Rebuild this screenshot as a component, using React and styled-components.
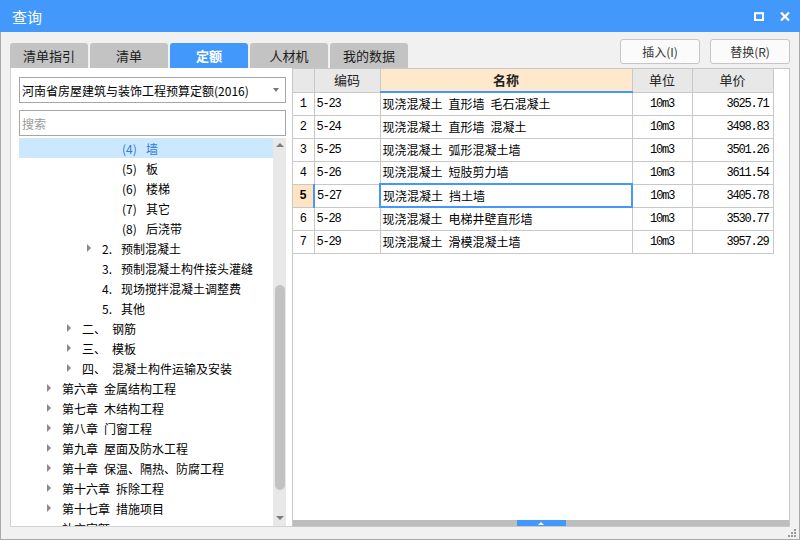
import React from "react";
import styled, { createGlobalStyle } from "styled-components";

const blue = "#4399fb";
const line = "#c8c8c8";
const sans = `"Noto Sans CJK SC", "Noto Sans", sans-serif`;
const mono = `"Liberation Mono", "Noto Sans CJK SC", monospace`;

const GlobalStyle = createGlobalStyle`
  html, body { margin: 0; padding: 0; background: #f1f1f1; }
  body { font-family: ${sans}; font-size: 12px; color: #000; }
`;

const Window = styled.div`
  width: 800px;
  height: 540px;
  display: flex;
  flex-direction: column;
  overflow: hidden;
  background: #f1f1f1;
`;

const TitleBar = styled.div`
  height: 32px;
  flex: none;
  background: ${blue};
  display: flex;
  align-items: center;
  padding: 0 10px 0 12px;
  color: #fff;
`;

const Title = styled.span`
  font-size: 15px;
  flex: 1;
  line-height: 1;
`;

const TitleButtons = styled.div`
  display: flex;
  align-items: center;
  gap: 16px;
`;

const Frame = styled.div`
  position: relative;
  flex: 1;
  display: flex;
  flex-direction: column;
  border: 1px solid #a9a9a9;
  border-top: none;
  padding: 0 9px 12px 9px;
  min-height: 0;
`;

const Toolbar = styled.div`
  height: 36px;
  flex: none;
  display: flex;
`;

const Tabs = styled.div`
  display: flex;
  gap: 2px;
  align-self: flex-end;
  flex: 1;
`;

const Tab = styled.div`
  width: 78px;
  height: 25px;
  border-radius: 3px 3px 0 0;
  background: ${p => (p.$active ? blue : "#c3c3c3")};
  color: ${p => (p.$active ? "#fff" : "#1c1c1c")};
  font-weight: ${p => (p.$active ? 700 : 400)};
  font-size: 13px;
  display: flex;
  align-items: center;
  justify-content: center;
`;

const Buttons = styled.div`
  display: flex;
  gap: 10px;
  margin-top: 7px;
  align-self: flex-start;
`;

const Button = styled.button`
  width: 80px;
  height: 25px;
  box-sizing: border-box;
  border: 1px solid #c6c6c6;
  border-radius: 3px;
  background: #fbfbfb;
  color: #333;
  font-family: ${sans};
  font-size: 12px;
  padding: 0;
`;

const Content = styled.div`
  flex: 1;
  display: flex;
  min-height: 0;
`;

const LeftPanel = styled.div`
  width: 282px;
  box-sizing: border-box;
  flex: none;
  background: #fff;
  border-left: 1px solid #d2d2d2;
  border-bottom: 1px solid #d2d2d2;
  padding: 9px 6px 0 8px;
  display: flex;
  flex-direction: column;
`;

const Field = styled.div`
  height: 26px;
  box-sizing: border-box;
  border: 1px solid #a6a6a6;
  display: flex;
  align-items: center;
  padding: 0 6px 0 2px;
  font-size: 12px;
  color: ${p => (p.$placeholder ? "#9a9a9a" : "#000")};
  margin-bottom: ${p => p.$gap || 0}px;
  flex: none;
`;

const FieldText = styled.span`
  flex: 1;
  white-space: nowrap;
`;

const DropArrow = styled.span`
  width: 0;
  height: 0;
  border-left: 3.5px solid transparent;
  border-right: 3.5px solid transparent;
  border-top: 4px solid #777;
`;

const TreeBox = styled.div`
  flex: 1;
  display: flex;
  min-height: 0;
`;

const TreeList = styled.div`
  flex: 1;
  overflow: hidden;
`;

const TreeRow = styled.div`
  height: 20px;
  display: flex;
  align-items: center;
  padding-left: ${p => 28 + (p.$level - 1) * 20}px;
  background: ${p => (p.$selected ? "#cce8ff" : "transparent")};
  color: ${p => (p.$selected ? "#2a7ae2" : "#000")};
  white-space: nowrap;
`;

const Caret = styled.span`
  width: 15px;
  flex: none;
  display: flex;
  align-items: center;
  &::before {
    content: "";
    display: ${p => (p.$show ? "block" : "none")};
    width: 0;
    height: 0;
    border-top: 4px solid transparent;
    border-bottom: 4px solid transparent;
    border-left: 4px solid #8a8a8a;
  }
`;

const Num = styled.span`
  display: inline-block;
  min-width: ${p => (p.$w ? `${p.$w}px` : "auto")};
  margin-right: 6px;
`;

const VScroll = styled.div`
  width: 13px;
  flex: none;
  background: #e8e8e8;
  display: flex;
  flex-direction: column;
  align-items: center;
`;

const ScrollArrow = styled.span`
  width: 0;
  height: 0;
  margin: ${p => (p.$down ? "auto 0 6px" : "5px 0 0")};
  border-left: 4px solid transparent;
  border-right: 4px solid transparent;
  ${p =>
    p.$down ? "border-top: 4px solid #7c7c7c;" : "border-bottom: 4px solid #7c7c7c;"}
`;

const Thumb = styled.div`
  width: 10px;
  height: 205px;
  margin-top: 138px;
  border-radius: 5px;
  background: #c2c2c2;
`;

const RightPanel = styled.div`
  flex: 1;
  box-sizing: border-box;
  background: #fff;
  border: 1px solid ${line};
  display: flex;
  flex-direction: column;
`;

const Grid = styled.table`
  border-collapse: collapse;
  table-layout: fixed;
  width: 480px;
  font-size: 12px;
  line-height: 16px;
`;

const Row = styled.tr`
  height: 23px;
`;

const Head = styled.th`
  padding: 0;
  font-size: 13px;
  font-weight: ${p => (p.$hot ? 700 : 400)};
  color: #222;
  background: ${p => (p.$hot ? "#ffe8cc" : "#e8e8e8")};
  border-right: 1px solid ${line};
  border-bottom: ${p => (p.$hot ? `2px solid ${blue}` : `1px solid ${line}`)};
  text-align: center;
`;

const Cell = styled.td`
  padding: ${p => (p.$align === "right" ? "0 4px 0 0" : p.$align === "center" ? "0" : "0 0 0 2px")};
  border-right: 1px solid ${line};
  border-bottom: 1px solid ${line};
  text-align: ${p => p.$align || "left"};
  font-family: ${p => (p.$mono ? mono : sans)};
  letter-spacing: ${p => (p.$mono ? "-1.2px" : "0")};
  white-space: pre;
  overflow: hidden;
`;

const IndexCell = styled.td`
  padding: 0;
  text-align: center;
  font-family: ${mono};
  font-size: 12px;
  font-weight: ${p => (p.$current ? 700 : 400)};
  background: ${p => (p.$current ? "#ffe4c4" : "#fff")};
  border-right: ${p => (p.$current ? `2px solid ${blue}` : `1px solid ${line}`)};
  border-bottom: 1px solid ${line};
`;

const NameCell = styled(Cell)`
  ${p => (p.$selected ? `border: 2px solid ${blue};` : "")}
`;

const Spacer = styled.div`
  flex: 1;
`;

const HBar = styled.div`
  height: 6px;
  flex: none;
  background: #bdbdbd;
  display: flex;
  justify-content: center;
`;

const Handle = styled.div`
  width: 49px;
  background: ${blue};
  display: flex;
  align-items: center;
  justify-content: center;
  &::before {
    content: "";
    width: 0;
    height: 0;
    border-left: 3px solid transparent;
    border-right: 3px solid transparent;
    border-bottom: 3px solid #fff;
  }
`;

const Grip = styled.svg`
  position: absolute;
  right: 2px;
  bottom: 1px;
`;

const tabs = ["清单指引", "清单", "定额", "人材机", "我的数据"];

const tree = [
  { level: 4, num: "(4)", w: 18, text: "墙", selected: true },
  { level: 4, num: "(5)", w: 18, text: "板" },
  { level: 4, num: "(6)", w: 18, text: "楼梯" },
  { level: 4, num: "(7)", w: 18, text: "其它" },
  { level: 4, num: "(8)", w: 18, text: "后浇带" },
  { level: 3, num: "2.", w: 13, text: "预制混凝土", arrow: true },
  { level: 3, num: "3.", w: 13, text: "预制混凝土构件接头灌缝" },
  { level: 3, num: "4.", w: 13, text: "现场搅拌混凝土调整费" },
  { level: 3, num: "5.", w: 13, text: "其他" },
  { level: 2, num: "二、", text: "钢筋", arrow: true },
  { level: 2, num: "三、", text: "模板", arrow: true },
  { level: 2, num: "四、", text: "混凝土构件运输及安装", arrow: true },
  { level: 1, num: "第六章", text: "金属结构工程", arrow: true },
  { level: 1, num: "第七章", text: "木结构工程", arrow: true },
  { level: 1, num: "第八章", text: "门窗工程", arrow: true },
  { level: 1, num: "第九章", text: "屋面及防水工程", arrow: true },
  { level: 1, num: "第十章", text: "保温、隔热、防腐工程", arrow: true },
  { level: 1, num: "第十六章", text: "拆除工程", arrow: true },
  { level: 1, num: "第十七章", text: "措施项目", arrow: true },
  { level: 1, num: "补充定额", text: "", arrow: false },
];

const rows = [
  ["5-23", "现浇混凝土 直形墙 毛石混凝土", "3625.71"],
  ["5-24", "现浇混凝土 直形墙 混凝土", "3498.83"],
  ["5-25", "现浇混凝土 弧形混凝土墙", "3501.26"],
  ["5-26", "现浇混凝土 短肢剪力墙", "3611.54"],
  ["5-27", "现浇混凝土 挡土墙", "3405.78"],
  ["5-28", "现浇混凝土 电梯井壁直形墙", "3530.77"],
  ["5-29", "现浇混凝土 滑模混凝土墙", "3957.29"],
];

const MaxIcon = () => (
  <svg width="10" height="9" viewBox="0 0 10 9">
    <rect x="1" y="1.2" width="8" height="6.8" fill="none" stroke="#fff" strokeWidth="2" />
  </svg>
);

const CloseIcon = () => (
  <svg width="10" height="9" viewBox="0 0 10 9">
    <path d="M1 0.5 L9 8.5 M9 0.5 L1 8.5" stroke="#fff" strokeWidth="2.2" />
  </svg>
);

export default function App() {
  return (
    <>
      <GlobalStyle />
      <Window>
        <TitleBar>
          <Title>查询</Title>
          <TitleButtons>
            <MaxIcon />
            <CloseIcon />
          </TitleButtons>
        </TitleBar>
        <Frame>
          <Toolbar>
            <Tabs>
              {tabs.map(t => (
                <Tab key={t} $active={t === "定额"}>
                  {t}
                </Tab>
              ))}
            </Tabs>
            <Buttons>
              <Button>插入(I)</Button>
              <Button>替换(R)</Button>
            </Buttons>
          </Toolbar>
          <Content>
            <LeftPanel>
              <Field $gap={7}>
                <FieldText>河南省房屋建筑与装饰工程预算定额(2016)</FieldText>
                <DropArrow />
              </Field>
              <Field $placeholder $gap={2}>
                <FieldText>搜索</FieldText>
              </Field>
              <TreeBox>
                <TreeList>
                  {tree.map((n, i) => (
                    <TreeRow key={i} $level={n.level} $selected={n.selected}>
                      <Caret $show={n.arrow} />
                      <Num $w={n.w}>{n.num}</Num>
                      {n.text}
                    </TreeRow>
                  ))}
                </TreeList>
                <VScroll>
                  <ScrollArrow />
                  <Thumb />
                  <ScrollArrow $down />
                </VScroll>
              </TreeBox>
            </LeftPanel>
            <RightPanel>
              <Grid>
                <colgroup>
                  <col style={{ width: 21 }} />
                  <col style={{ width: 66 }} />
                  <col style={{ width: 252 }} />
                  <col style={{ width: 60 }} />
                  <col style={{ width: 81 }} />
                </colgroup>
                <thead>
                  <Row>
                    <Head />
                    <Head>编码</Head>
                    <Head $hot>名称</Head>
                    <Head>单位</Head>
                    <Head>单价</Head>
                  </Row>
                </thead>
                <tbody>
                  {rows.map((r, i) => {
                    const current = i === 4;
                    return (
                      <Row key={r[0]}>
                        <IndexCell $current={current}>{i + 1}</IndexCell>
                        <Cell $mono>{r[0]}</Cell>
                        <NameCell $selected={current}>
                          {r[1].replace(/ /g, "\u2002")}
                        </NameCell>
                        <Cell $mono $align="center">10m3</Cell>
                        <Cell $mono $align="right">{r[2]}</Cell>
                      </Row>
                    );
                  })}
                </tbody>
              </Grid>
              <Spacer />
              <HBar>
                <Handle />
              </HBar>
            </RightPanel>
          </Content>
          <Grip width="10" height="10" viewBox="0 0 10 10">
            {[[7, 1], [4, 4], [7, 4], [1, 7], [4, 7], [7, 7]].map(([x, y]) => (
              <rect key={`${x}-${y}`} x={x} y={y} width="2" height="2" fill="#9a9a9a" />
            ))}
          </Grip>
        </Frame>
      </Window>
    </>
  );
}
